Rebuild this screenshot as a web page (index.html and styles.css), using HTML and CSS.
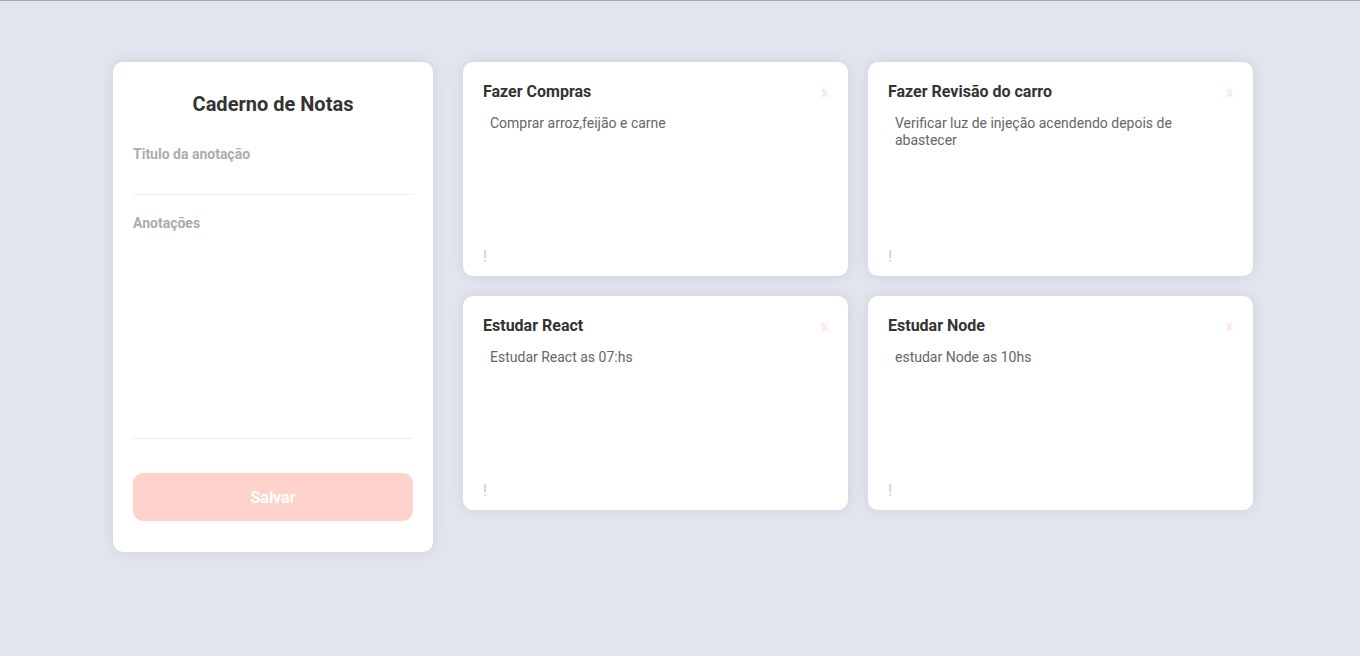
FILE: index.html
```html
<!DOCTYPE html>
<html lang="pt-BR">
<head>
<meta charset="utf-8">
<title>Caderno de Notas</title>
<link rel="stylesheet" href="styles.css">
</head>
<body>
<div class="app">
  <aside class="sidebar">
    <h1 class="sidebar-title">Caderno de Notas</h1>
    <form class="note-form">
      <div class="input-block">
        <label for="title">Titulo da anotação</label>
        <input id="title" type="text">
      </div>
      <div class="input-block">
        <label for="notes">Anotações</label>
        <textarea id="notes"></textarea>
      </div>
      <button type="button" class="save-btn">Salvar</button>
    </form>
  </aside>
  <main class="notes">
    <ul class="notes-grid">
      <li class="note">
        <div class="note-head"><strong class="note-title">Fazer Compras</strong><span class="note-del">x</span></div>
        <p class="note-body">Comprar arroz,feijão e carne</p>
        <span class="note-flag">!</span>
      </li>
      <li class="note">
        <div class="note-head"><strong class="note-title">Fazer Revisão do carro</strong><span class="note-del">x</span></div>
        <p class="note-body">Verificar luz de injeção acendendo depois de abastecer</p>
        <span class="note-flag">!</span>
      </li>
      <li class="note">
        <div class="note-head"><strong class="note-title">Estudar React</strong><span class="note-del">x</span></div>
        <p class="note-body">Estudar React as 07:hs</p>
        <span class="note-flag">!</span>
      </li>
      <li class="note">
        <div class="note-head"><strong class="note-title">Estudar Node</strong><span class="note-del">x</span></div>
        <p class="note-body">estudar Node as 10hs</p>
        <span class="note-flag">!</span>
      </li>
    </ul>
  </main>
</div>
</body>
</html>
```
FILE: styles.css
```css
* {
  box-sizing: border-box;
}

html, body {
  margin: 0;
  padding: 0;
}

body {
  background: #e2e5ee;
  border-top: 1px solid #a9a9b0;
  font-family: Roboto, "Liberation Sans", sans-serif;
  min-height: 656px;
}

.app {
  width: 1140px;
  margin-left: 113px;
  padding-top: 61px;
  display: flex;
  align-items: flex-start;
}

.sidebar {
  width: 320px;
  flex-shrink: 0;
  background: #fff;
  border-radius: 10px;
  box-shadow: 0 0 14px 0 rgba(0, 0, 0, 0.09);
  padding: 30px 20px 31px;
}

.sidebar-title {
  margin: 0;
  font-size: 20px;
  line-height: 24px;
  font-weight: 700;
  color: #333;
  text-align: center;
}

.note-form {
  margin-top: 30px;
  display: flex;
  flex-direction: column;
}

.input-block + .input-block {
  margin-top: 20px;
}

.input-block label {
  display: block;
  color: #acacac;
  font-size: 14px;
  line-height: 17px;
  font-weight: 700;
}

.input-block input,
.input-block textarea {
  display: block;
  width: 100%;
  border: 0;
  border-bottom: 1px solid #eee;
  font-family: inherit;
  font-size: 14px;
  color: #666;
  outline: none;
  background: transparent;
}

.input-block input {
  height: 32px;
}

.input-block textarea {
  height: 207px;
  resize: none;
  padding: 0;
}

.save-btn {
  margin-top: 34px;
  width: 100%;
  height: 48px;
  border: 0;
  border-radius: 10px;
  background: #ffd3cb;
  color: #fff;
  font-family: inherit;
  font-size: 16px;
  font-weight: 700;
}

.notes {
  flex: 1;
  margin-left: 30px;
}

.notes-grid {
  list-style: none;
  margin: 0;
  padding: 0;
  display: grid;
  grid-template-columns: 1fr 1fr;
  gap: 20px;
}

.note {
  background: #fff;
  border-radius: 10px;
  box-shadow: 0 0 14px 0 rgba(0, 0, 0, 0.09);
  padding: 19px 20px 10px;
  height: 214px;
  display: flex;
  flex-direction: column;
}

.note-head {
  display: flex;
  justify-content: space-between;
  align-items: center;
}

.note-title {
  font-size: 16px;
  line-height: 19px;
  color: #333;
}

.note-del {
  font-size: 14px;
  font-weight: 700;
  color: #ffe6e0;
  line-height: 19px;
  margin-top: 2px;
}

.note-body {
  margin: 13px 0 0 7px;
  font-size: 14px;
  line-height: 17px;
  color: #666;
}

.note-flag {
  margin-top: auto;
  font-size: 16px;
  line-height: 19px;
  color: #ccc;
  align-self: flex-start;
}
```
